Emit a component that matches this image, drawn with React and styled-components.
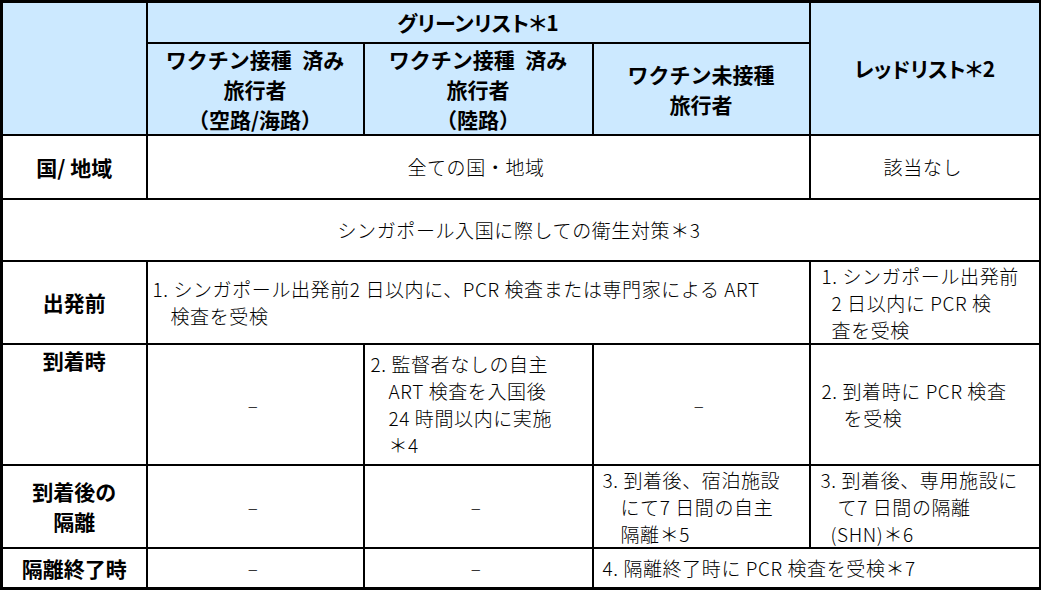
import React from 'react';
import styled, { createGlobalStyle } from 'styled-components';

const GlobalStyle = createGlobalStyle`
  html, body {
    margin: 0;
    padding: 0;
    background: #ffffff;
  }
  body {
    font-family: "Noto Sans CJK JP", "Noto Sans", sans-serif;
    color: #000;
  }
`;

const Table = styled.table`
  width: 1039px;
  table-layout: fixed;
  border-collapse: collapse;
  border: 3px solid #000;
`;

const Row = styled.tr`
  height: ${p => p.$h}px;
`;

const Head = styled.th`
  background: #cce9ff;
  border: 2px solid #000;
  font-size: 21px;
  font-weight: 700;
  line-height: 30px;
  text-align: center;
  vertical-align: middle;
  padding: 0;
  white-space: nowrap;
  ${p => p.$palt && 'font-feature-settings: "palt";'}
`;

const Label = styled.th`
  background: #fff;
  border: 2px solid #000;
  font-size: 21px;
  font-weight: 700;
  line-height: 30px;
  text-align: center;
  vertical-align: ${p => (p.$top ? 'top' : 'middle')};
  padding: 0;
  white-space: nowrap;
`;

const Cell = styled.td`
  border: 2px solid #000;
  font-size: 19px;
  font-weight: 300;
  line-height: 27px;
  letter-spacing: 0.6px;
  text-align: ${p => (p.$center ? 'center' : 'left')};
  vertical-align: middle;
  padding: 0 4px 0 ${p => (p.$center ? 0 : p.$pad ?? 9)}px;
  white-space: nowrap;
`;

const Line = styled.div`
  padding-left: ${p => p.$indent || 0}px;
`;

const Dash = () => <Cell $center>–</Cell>;

export default function App() {
  return (
    <>
      <GlobalStyle />
      <Table>
        <colgroup>
          <col style={{ width: 145 }} />
          <col style={{ width: 217 }} />
          <col style={{ width: 229 }} />
          <col style={{ width: 217 }} />
          <col style={{ width: 231 }} />
        </colgroup>
        <tbody>
          <Row $h={41}>
            <Head rowSpan={2}></Head>
            <Head colSpan={3} $palt>グリーンリスト＊1</Head>
            <Head rowSpan={2} $palt>レッドリスト＊2</Head>
          </Row>
          <Row $h={92}>
            <Head>
              <Line>ワクチン接種{'\u2002'}済み</Line>
              <Line>旅行者</Line>
              <Line>（空路/海路）</Line>
            </Head>
            <Head>
              <Line>ワクチン接種{'\u2002'}済み</Line>
              <Line>旅行者</Line>
              <Line>（陸路）</Line>
            </Head>
            <Head>
              <Line>ワクチン未接種</Line>
              <Line>旅行者</Line>
            </Head>
          </Row>
          <Row $h={64}>
            <Label>国/ 地域</Label>
            <Cell colSpan={3} $center>全ての国・地域</Cell>
            <Cell $center>該当なし</Cell>
          </Row>
          <Row $h={62}>
            <Cell colSpan={5} $center>シンガポール入国に際しての衛生対策＊3</Cell>
          </Row>
          <Row $h={83}>
            <Label>出発前</Label>
            <Cell colSpan={3} $pad={5}>
              <Line>1. シンガポール出発前2 日以内に、PCR 検査または専門家による ART</Line>
              <Line $indent={18}>検査を受検</Line>
            </Cell>
            <Cell $pad={11}>
              <Line>1. シンガポール出発前</Line>
              <Line $indent={10}>2 日以内に PCR 検</Line>
              <Line $indent={10}>査を受検</Line>
            </Cell>
          </Row>
          <Row $h={121}>
            <Label $top>到着時</Label>
            <Dash />
            <Cell $pad={6}>
              <Line>2. 監督者なしの自主</Line>
              <Line $indent={18}>ART 検査を入国後</Line>
              <Line $indent={18}>24 時間以内に実施</Line>
              <Line $indent={18}>＊4</Line>
            </Cell>
            <Dash />
            <Cell $pad={11}>
              <Line>2. 到着時に PCR 検査</Line>
              <Line $indent={22}>を受検</Line>
            </Cell>
          </Row>
          <Row $h={83}>
            <Label>
              <Line>到着後の</Line>
              <Line>隔離</Line>
            </Label>
            <Dash />
            <Dash />
            <Cell $pad={9}>
              <Line>3. 到着後、宿泊施設</Line>
              <Line $indent={18}>にて7 日間の自主</Line>
              <Line $indent={18}>隔離＊5</Line>
            </Cell>
            <Cell $pad={10}>
              <Line>3. 到着後、専用施設に</Line>
              <Line $indent={17}>て7 日間の隔離</Line>
              <Line $indent={10}>(SHN)＊6</Line>
            </Cell>
          </Row>
          <Row $h={41}>
            <Label>隔離終了時</Label>
            <Dash />
            <Dash />
            <Cell colSpan={2} $pad={9}>4. 隔離終了時に PCR 検査を受検＊7</Cell>
          </Row>
        </tbody>
      </Table>
    </>
  );
}
